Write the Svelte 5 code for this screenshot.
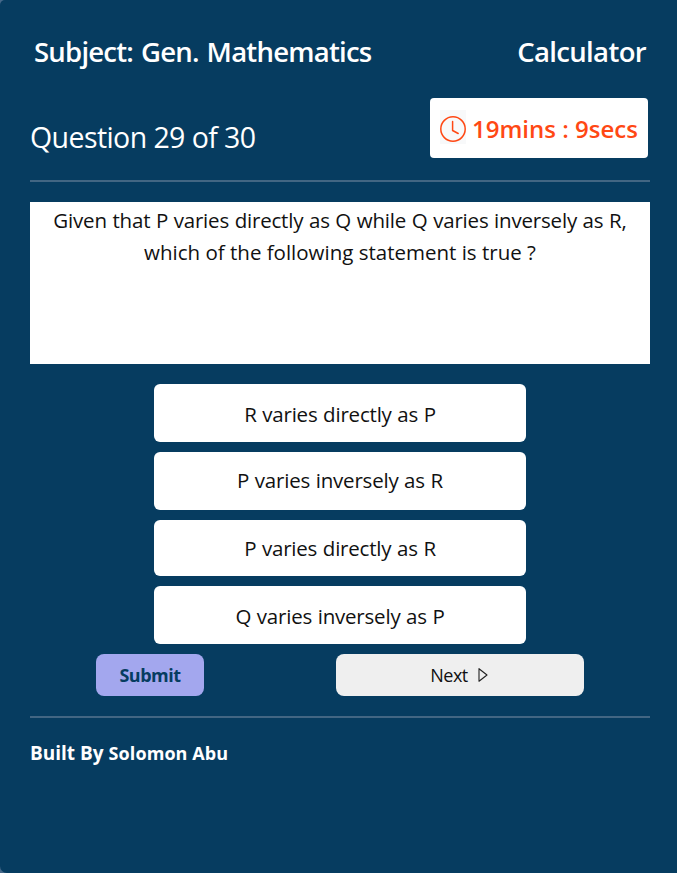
<script>
  const options = [
    { text: 'R varies directly as P', height: 58, shift: 3 },
    { text: 'P varies inversely as R', height: 58, shift: -1 },
    { text: 'P varies directly as R', height: 56, shift: 1 },
    { text: 'Q varies inversely as P', height: 58, shift: 3 }
  ];
</script>

<main>
  <header>
    <h2 class="subject">Subject: Gen. Mathematics</h2>
    <h2>Calculator</h2>
  </header>

  <section class="status">
    <div class="count">Question 29 of 30</div>
    <div class="timer">
      <span class="clock">
        <svg width="26" height="34" viewBox="0 0 26 34" fill="none" stroke="#ff4814">
          <circle cx="13" cy="19" r="12.2" stroke-width="1.5" />
          <path d="M12.6 11.5v9l5.6 3" stroke-width="1.5" stroke-linecap="round" stroke-linejoin="round" />
        </svg>
      </span>
      <span class="time">19mins : 9secs</span>
    </div>
  </section>

  <hr />

  <section class="question">
    <div class="line-one">Given that P varies directly as Q while Q varies inversely as R,</div>
    <div>which of the following statement is true ?</div>
  </section>

  <section class="options">
    {#each options as o}
      <button style="height: {o.height}px; padding-top: {Math.max(o.shift, 0)}px; padding-bottom: {Math.max(-o.shift, 0)}px">
        {o.text}
      </button>
    {/each}
  </section>

  <section class="actions">
    <button class="submit">Submit</button>
    <button class="next">
      <span>Next</span>
      <svg width="10" height="14" viewBox="0 0 10 14" fill="none" stroke="#222" stroke-width="1.1">
        <path d="M1 .7v12.6L9 7Z" stroke-linejoin="round" />
      </svg>
    </button>
  </section>

  <hr />

  <footer><span class="built">Built By</span><span class="author">Solomon Abu</span></footer>
</main>

<style>
  :global(body) {
    background: #46698a;
  }

  main {
    box-sizing: border-box;
    height: 873px;
    padding: 28px 27px 0 30px;
    background: #063c60;
    border-radius: 5px 0 0 7px;
    color: #fff;
    font-family: 'Open Sans', 'Noto Sans', sans-serif;
    white-space: nowrap;
    overflow: hidden;
  }

  header {
    display: flex;
    justify-content: space-between;
    height: 69.5px;
    padding: 0 4px;
  }

  h2 {
    margin: 0;
    font-size: 27.5px;
    line-height: 48px;
    font-weight: 600;
    letter-spacing: -0.65px;
  }

  .subject {
    letter-spacing: -0.77px;
    word-spacing: 1.5px;
  }

  .status {
    display: flex;
    justify-content: space-between;
    height: 82.5px;
    padding-right: 2px;
  }

  .count {
    padding-top: 19px;
    font-size: 28.5px;
    line-height: 40px;
    letter-spacing: -0.58px;
  }

  .timer {
    display: flex;
    align-items: center;
    box-sizing: border-box;
    width: 218px;
    height: 60px;
    padding-left: 10px;
    background: #fff;
    border-radius: 4px;
    color: #ff4814;
    font-size: 24px;
    font-weight: 600;
  }

  .clock {
    display: flex;
    height: 34px;
    margin: 0 6px 1px 0;
    background: #f8f9fa;
  }

  .time {
    line-height: 34px;
    margin-top: 3px;
  }

  hr {
    height: 2px;
    margin: 0;
    border: 0;
    background: #426683;
  }

  .question {
    box-sizing: border-box;
    height: 162px;
    margin-top: 19.7px;
    padding-top: 2px;
    background: #fff;
    color: #111;
    font-size: 20.5px;
    line-height: 32px;
    text-align: center;
  }

  .line-one {
    letter-spacing: -0.19px;
    word-spacing: 0.5px;
  }

  button {
    display: flex;
    align-items: center;
    justify-content: center;
    box-sizing: border-box;
    border: 0;
    margin: 0;
    padding: 0;
    font-family: inherit;
  }

  .options {
    display: flex;
    flex-direction: column;
    align-items: center;
    gap: 10px;
    margin-top: 20px;
  }

  .options button {
    width: 372px;
    background: #fff;
    border-radius: 6px;
    color: #111;
    font-size: 20.5px;
    line-height: 30px;
    letter-spacing: -0.2px;
    word-spacing: 0.5px;
  }

  .actions {
    display: flex;
    justify-content: space-between;
    margin: 10px 66px 20px;
  }

  .actions button {
    height: 42px;
    border-radius: 8px;
    font-size: 18px;
    line-height: 26px;
    letter-spacing: -0.5px;
  }

  .submit {
    width: 108px;
    background: #a3a7ee;
    color: #063c60;
    font-weight: 700;
  }

  .actions .next {
    gap: 10px;
    width: 248px;
    padding-right: 2px;
    background: #efefef;
    color: #111;
  }

  footer {
    display: flex;
    gap: 5px;
    padding-top: 20px;
    font-size: 18px;
    line-height: 30px;
    font-weight: 700;
  }

  .built {
    font-size: 19px;
  }

  .author {
    letter-spacing: 0.08px;
  }
</style>
